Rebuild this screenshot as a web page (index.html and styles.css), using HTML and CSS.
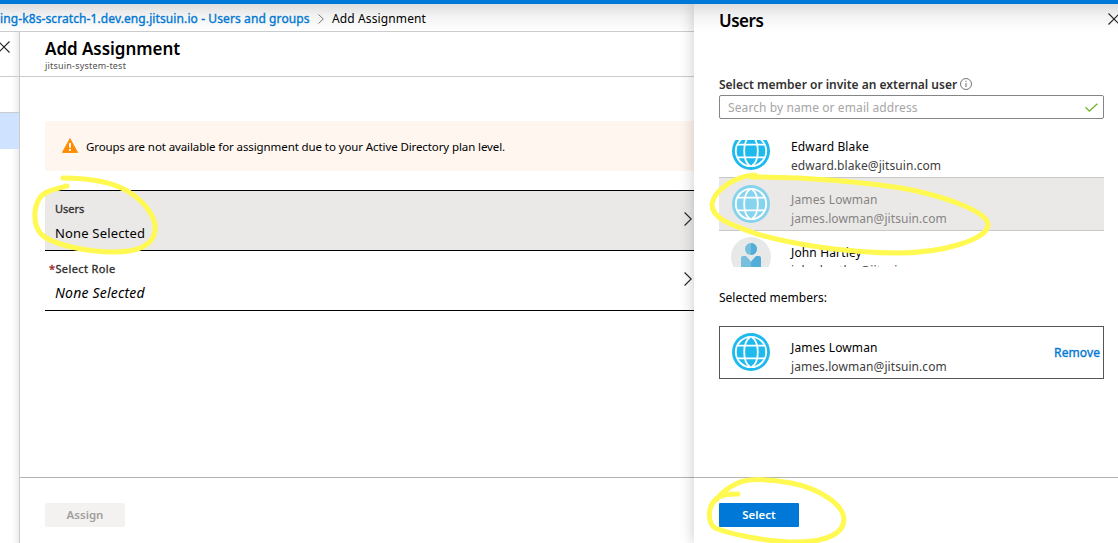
FILE: index.html
```html
<!DOCTYPE html>
<html lang="en">
<head>
<meta charset="utf-8">
<title>Add Assignment</title>
<link rel="stylesheet" href="styles.css">
</head>
<body>
<svg class="defs" width="0" height="0" aria-hidden="true">
  <symbol id="globe" viewBox="0 0 38 38">
    <circle cx="19" cy="19" r="19" fill="currentColor"/>
    <g fill="none" stroke="#fff" stroke-width="1.8">
      <circle cx="19" cy="19" r="15.2"/>
      <path d="M18 4.200Q12.200 8 12.200 19T18 33.800M20 4.200Q25.800 8 25.800 19T20 33.800"/>
      <path d="M6 12.600h26M6 25.400h26"/>
    </g>
  </symbol>
  <symbol id="cross" viewBox="0 0 12 12">
    <path d="M.5.5l11 11M11.5.5l-11 11" fill="none" stroke="#222" stroke-width="1.1"/>
  </symbol>
  <symbol id="chevron" viewBox="0 0 8 14">
    <path d="M.6.5L7.2 7 .6 13.5" fill="none" stroke="#222" stroke-width="1.1"/>
  </symbol>
</svg>
<div class="app">
  <div class="topbar"></div>
  <div class="workspace">
    <div class="journey">
      <nav class="crumbs">
        <a class="crumb-link">ing-k8s-scratch-1.dev.eng.jitsuin.io - Users and groups</a>
        <svg class="crumb-sep" viewBox="0 0 6 10"><path d="M.5.5L5.3 5 .5 9.5" fill="none" stroke="#777"/></svg>
        <span class="crumb-current">Add Assignment</span>
      </nav>
      <div class="blades">
        <aside class="previous">
          <div class="previous-head"><svg class="close"><use href="#cross"/></svg></div>
          <div class="previous-gap"></div>
          <div class="previous-item"></div>
        </aside>
        <main class="blade">
          <header class="blade-head">
            <h1 class="title blade-title">Add Assignment</h1>
            <div class="subtitle">jitsuin-system-test</div>
          </header>
          <section class="blade-body">
            <div class="alert">
              <svg class="warning" viewBox="0 0 16 15"><path d="M8 .7L15.5 14.4H.5z" fill="#ff8c00" stroke="#ff8c00" stroke-linejoin="round"/><path d="M8 5v4.8M8 11v2" stroke="#fff" stroke-width="2"/></svg>
              <span class="alert-text">Groups are not available for assignment due to your Active Directory plan level.</span>
            </div>
            <div class="option option-active">
              <div><div class="option-label users-label">Users</div><div class="option-value">None Selected</div></div>
              <svg class="chevron"><use href="#chevron"/></svg>
            </div>
            <div class="option">
              <div><div class="option-label role-label"><span class="required">*</span>Select Role</div><div class="option-value placeholder-value">None Selected</div></div>
              <svg class="chevron"><use href="#chevron"/></svg>
            </div>
          </section>
          <footer class="foot"><button class="button button-off">Assign</button></footer>
        </main>
      </div>
    </div>
    <section class="panel">
      <header class="panel-head"><h2 class="title panel-title">Users</h2><svg class="close panel-close"><use href="#cross"/></svg></header>
      <div class="panel-body">
        <div class="field-label"><span class="field-text">Select member or invite an external user</span>
          <svg class="info" viewBox="0 0 12 12"><circle cx="6" cy="6" r="5.5" fill="none" stroke="#666" stroke-width=".9"/><path d="M6 5v4M6 2.8v1.1" stroke="#666"/></svg>
        </div>
        <div class="search"><span class="search-text">Search by name or email address</span>
          <svg class="check" viewBox="0 0 13 9"><path d="M.6 4.3l3.8 3.8L12.4.7" fill="none" stroke="#70b52c" stroke-width="1.3"/></svg>
        </div>
        <div class="list">
          <div class="member">
            <svg class="avatar"><use href="#globe"/></svg>
            <div class="who"><div class="name">Edward Blake</div><div class="mail">edward.blake@jitsuin.com</div></div>
          </div>
          <div class="member member-picked">
            <svg class="avatar"><use href="#globe"/></svg>
            <div class="who"><div class="name">James Lowman</div><div class="mail">james.lowman@jitsuin.com</div></div>
          </div>
          <div class="member member-last">
            <svg class="avatar person" viewBox="0 0 40 40"><circle cx="20" cy="20" r="20" fill="#e6e9e8"/><circle cx="20" cy="12" r="6" fill="#77bfdf"/><path d="M20 6a6 6 0 010 12z" fill="#52aed8"/><path d="M10 40V21q0-2 2-2h3l5 5.500v16z" fill="#77bfdf"/><path d="M20 40V24.500l5-5.500h3q2 0 2 2v19z" fill="#52aed8"/></svg>
            <div class="who"><div class="name">John Hartley</div><div class="mail">john.hartley@jitsuin.com</div></div>
          </div>
        </div>
        <div class="selected-title">Selected members:</div>
        <div class="member card">
          <svg class="avatar"><use href="#globe"/></svg>
          <div class="who"><div class="name">James Lowman</div><div class="mail">james.lowman@jitsuin.com</div></div>
          <a class="remove">Remove</a>
        </div>
      </div>
      <footer class="foot"><button class="button button-on">Select</button></footer>
    </section>
  </div>
  <svg class="marker" viewBox="0 0 1118 543">
    <g fill="none" stroke="#fff951" stroke-width="5" stroke-linecap="round" stroke-linejoin="round">
      <path d="M63 178C93 178 113 182 129 192C145 202 157 218 155 231C153 246 136 252 114 252C87 252 54 245 42 235C32 225 34 208 39 199C44 191 55 189 67 186"/>
      <path d="M755 175C734 176 714 191 712 204C711 219 735 226 757 234C790 244 846 253 899 253C940 253 989 240 988 224C986 210 940 196 912 190C869 182 806 177 752 177"/>
      <path d="M738 494C730 494 720 494 715 500C707 509 708 523 715 528C730 534 766 542 798 542C825 542 844 534 844 519C843 503 817 488 791 483C772 479 749 478 738 483C729 487 721 493 717 499"/>
    </g>
  </svg>
</div>
</body>
</html>
```
FILE: styles.css
```css
* { box-sizing: border-box; }
body { margin: 0; font: 12px/18px "Noto Sans", "Open Sans", sans-serif; color: #000; background: #fff; overflow: hidden; }
svg { display: block; flex: none; }
.defs { position: absolute; }
.app { position: relative; width: 1118px; height: 543px; display: flex; flex-direction: column; overflow: hidden; white-space: nowrap; }
.topbar { height: 4px; flex: none; background: #0078d7; }
.workspace { flex: 1; display: flex; min-height: 0; }
.journey { width: 694px; display: flex; flex-direction: column; }
.crumbs { height: 28px; flex: none; display: flex; align-items: center; padding-top: 2px; border-bottom: 1px solid #ccc; background: linear-gradient(#dedede, #f3f3f3 45%, #fff); }
.crumb-link { width: 310px; color: #0078d4; letter-spacing: .1px; -webkit-text-stroke: .35px #0078d4; }
.crumb-current { letter-spacing: .12px; }
.crumb-sep { width: 6px; height: 10px; margin: 0 8px; }
.blades { flex: 1; display: flex; min-height: 0; }
.previous { width: 20px; border-right: 1px solid #ccc; background: linear-gradient(90deg, #fff 12px, #eee); }
.previous-head { height: 45px; border-bottom: 1px solid #ccc; padding-top: 9px; }
.close { width: 12px; height: 12px; }
.previous-head .close { margin-left: -2px; }
.previous-gap { height: 36px; border-bottom: 1px solid #ccc; }
.previous-item { height: 36px; background: #cfe2ff; }
.blade { flex: 1; display: flex; flex-direction: column; }
.blade-head { height: 45px; flex: none; padding: 6px 0 0 25px; border-bottom: 1px solid #ccc; }
.title { margin: 0; font-size: 17px; line-height: 22px; font-weight: 600; }
.blade-title { letter-spacing: -.04px; }
.panel-title { letter-spacing: -.5px; }
.subtitle { font-size: 9px; line-height: 11px; color: #505050; letter-spacing: .2px; }
.blade-body { flex: 1; padding: 44px 0 0 25px; }
.alert { height: 50px; margin-bottom: 19px; padding-left: 17px; display: flex; align-items: center; gap: 8px; background: #fff6f0; }
.warning { width: 16px; height: 15px; margin-top: -2px; }
.alert-text { font-size: 11.5px; letter-spacing: -.1px; padding-top: 2px; }
.option { height: 60px; padding: 9px 2px 0 10px; display: flex; justify-content: space-between; border-bottom: 1px solid #000; }
.option-active { height: 61px; border-top: 1px solid #000; background: #ebe9e8; }
.option-label { font-size: 11px; color: #323130; -webkit-text-stroke: .35px #323130; }
.role-label { margin-left: -6px; letter-spacing: .38px; }
.required { color: #a4262c; -webkit-text-stroke-color: #a4262c; }
.option-value { margin-top: 6px; font-size: 13px; letter-spacing: .17px; }
.placeholder-value { font-size: 14px; font-style: italic; letter-spacing: .2px; }
.chevron { width: 8px; height: 14px; margin-top: 12px; }
.foot { height: 66px; flex: none; padding: 25px 0 0 25px; border-top: 1px solid #b3b3b3; }
.button { display: block; width: 80px; height: 24px; padding: 0; border: 0; border-radius: 2px; font: 600 11.5px/24px "Noto Sans", sans-serif; }
.button-off { background: #f3f2f1; color: #a19f9d; }
.button-on { background: #0078d7; color: #fff; border-radius: 1px; }
.panel { width: 424px; display: flex; flex-direction: column; background: linear-gradient(#dedede, #f3f3f3 12px, #fff 27px); box-shadow: 0 0 14px rgba(0, 0, 0, .22); clip-path: inset(0 0 0 -20px); }
.panel-head { height: 71px; display: flex; justify-content: space-between; padding: 6px 0 0 25px; }
.panel-close { margin: 3px -2px 0 0; }
.panel-body { flex: 1; padding: 0 14px 0 25px; }
.field-label { height: 20px; display: flex; align-items: flex-start; gap: 3px; font-weight: 600; color: #323130; }
.field-text { padding-top: 1px; }
.info { width: 12px; height: 12px; margin-top: 3px; }
.search { height: 24px; padding: 0 5px 0 8px; display: flex; align-items: center; justify-content: space-between; border: 1px solid #858585; border-radius: 2px; background: #fff; color: #a6a6a6; }
.search-text { padding-top: 2px; letter-spacing: .1px; }
.check { width: 13px; height: 9px; }
.list { height: 127px; margin-top: 21px; overflow: hidden; }
.list .member:first-child { margin-top: -16px; }
.member { height: 53px; display: flex; padding: 8px 0 0 13px; }
.member-picked { height: 54px; padding-top: 7px; border: solid #c8c8c8; border-width: 1px 0; background: #ebe9e8; }
.member-picked .avatar { color: #86d3ee; }
.member-picked .name, .member-picked .mail { color: #858483; }
.member-last { padding-top: 7px; }
.member-last .who { margin-top: 6px; line-height: 18px; }
.avatar { width: 38px; height: 38px; color: #1fbaed; }
.person { width: 40px; height: 40px; margin: -1px -1px 0; }
.who { margin: 5px 0 0 21px; line-height: 19px; }
.name { letter-spacing: .14px; }
.mail { color: #404040; letter-spacing: .07px; }
.selected-title { margin-top: 22px; height: 37px; }
.card { padding: 6px 3px 0 12px; border: 1px solid #555; }
.card .who { margin-top: 5px; }
.remove { margin: 11px 0 0 auto; color: #0078d4; letter-spacing: .1px; -webkit-text-stroke: .35px #0078d4; }
.marker { position: absolute; inset: 0; width: 1118px; height: 543px; pointer-events: none; }
```
